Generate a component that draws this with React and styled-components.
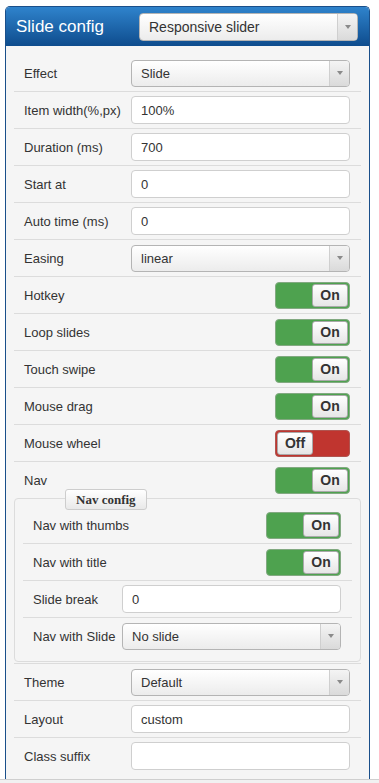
import React from "react";
import styled, { createGlobalStyle } from "styled-components";

const GlobalStyle = createGlobalStyle`
  html, body {
    margin: 0;
    padding: 0;
    background: #fff;
  }
  body {
    font-family: "Liberation Sans", Arial, sans-serif;
    font-size: 13px;
    color: #333;
  }
`;

const Page = styled.div`
  height: 783px;
  display: flex;
  flex-direction: column;
  overflow: hidden;
`;

const Panel = styled.div`
  flex: 1;
  margin: 6px 0 0 5px;
  width: 365px;
  box-sizing: border-box;
  border: 1px solid #1a4f8a;
  border-bottom: none;
  border-radius: 5px 5px 0 0;
  background: #f5f5f5;
  display: flex;
  flex-direction: column;
`;

const Footer = styled.div`
  height: 3px;
  border-top: 1px solid #cfcfcf;
  background: #f1f1f1;
`;

const Header = styled.div`
  height: 39px;
  display: flex;
  align-items: center;
  justify-content: space-between;
  padding: 0 11px 0 10px;
  border-radius: 4px 4px 0 0;
  background: linear-gradient(#2f83cc, #0e4c8d);
`;

const Title = styled.div`
  color: #fff;
  font-size: 17px;
`;

const Body = styled.div`
  padding: 9px 8px 5px 8px;
`;

const Group = styled.div`
  display: flex;
  flex-direction: column;
`;

const Row = styled.div`
  height: 37px;
  box-sizing: border-box;
  display: flex;
  align-items: center;
  justify-content: space-between;
  padding: 0 11px 0 10px;
  border-bottom: 1px solid #dcdcdc;
  &:last-child {
    height: 36px;
    border-bottom: none;
  }
`;

const Label = styled.span`
  white-space: nowrap;
`;

const Input = styled.input`
  width: 219px;
  height: 28px;
  box-sizing: border-box;
  border: 1px solid #cfcfcf;
  border-radius: 4px;
  padding: 0 9px;
  background: #fff;
  font-family: inherit;
  font-size: 13px;
  color: #333;
  outline: none;
`;

const SelectBox = styled.div`
  width: 219px;
  height: ${(p) => (p.$big ? 28 : 27)}px;
  box-sizing: border-box;
  display: flex;
  border: 1px solid #b4b4b4;
  border-radius: 4px;
  background: linear-gradient(#ffffff, #ececec);
  font-size: ${(p) => (p.$big ? 14 : 13)}px;
  color: #333;
`;

const SelectText = styled.span`
  flex: 1;
  display: flex;
  align-items: center;
  padding-left: 9px;
`;

const Arrow = styled.span`
  width: 19px;
  display: flex;
  align-items: center;
  justify-content: center;
  border-left: 1px solid #cfcfcf;
  border-radius: 0 3px 3px 0;
  background: linear-gradient(#f4f4f4, #dadada);
  &::after {
    content: "";
    border-left: 3px solid transparent;
    border-right: 3px solid transparent;
    border-top: 4px solid #8a8a8a;
  }
`;

const Switch = styled.div`
  width: 75px;
  height: 27px;
  box-sizing: border-box;
  padding: 1px;
  display: flex;
  justify-content: ${(p) => (p.$on ? "flex-end" : "flex-start")};
  border: 1px solid ${(p) => (p.$on ? "#82a981" : "#b0544f")};
  border-radius: 4px;
  background: ${(p) => (p.$on ? "#4ea24f" : "#c0352f")};
`;

const Knob = styled.span`
  width: 36px;
  box-sizing: border-box;
  display: flex;
  align-items: center;
  justify-content: center;
  border: 1px solid #a9a9a9;
  border-radius: 3px;
  background: linear-gradient(#ffffff, #e6e6e6);
  font-weight: bold;
  font-size: 14px;
  color: #333;
`;

const FieldsetWrap = styled.div`
  border-bottom: 1px solid #dcdcdc;
  padding-bottom: 1px;
`;

const Fieldset = styled.div`
  display: flex;
  flex-direction: column;
  border: 1px solid #dcdcdc;
  border-radius: 4px;
  padding: 0 8px 7px 8px;
`;

const Legend = styled.div`
  align-self: flex-start;
  margin: -10px 0 -3px 42px;
  height: 21px;
  box-sizing: border-box;
  padding: 0 10px;
  border: 1px solid #cdcdcd;
  border-radius: 3px;
  background: linear-gradient(#ffffff, #e9e9e9);
  font-family: "Liberation Serif", "Times New Roman", serif;
  font-weight: bold;
  font-size: 13px;
  line-height: 19px;
  color: #333;
  position: relative;
`;

const Select = ({ value, big }) => (
  <SelectBox $big={big}>
    <SelectText>{value}</SelectText>
    <Arrow />
  </SelectBox>
);

const Toggle = ({ on }) => (
  <Switch $on={on}>
    <Knob>{on ? "On" : "Off"}</Knob>
  </Switch>
);

const Field = ({ label, children }) => (
  <Row>
    <Label>{label}</Label>
    {children}
  </Row>
);

const App = () => (
  <Page>
    <GlobalStyle />
    <Panel>
      <Header>
        <Title>Slide config</Title>
        <Select value="Responsive slider" big />
      </Header>
      <Body>
        <Group>
          <Field label="Effect">
            <Select value="Slide" />
          </Field>
          <Field label="Item width(%,px)">
            <Input defaultValue="100%" />
          </Field>
          <Field label="Duration (ms)">
            <Input defaultValue="700" />
          </Field>
          <Field label="Start at">
            <Input defaultValue="0" />
          </Field>
          <Field label="Auto time (ms)">
            <Input defaultValue="0" />
          </Field>
          <Field label="Easing">
            <Select value="linear" />
          </Field>
          <Field label="Hotkey">
            <Toggle on />
          </Field>
          <Field label="Loop slides">
            <Toggle on />
          </Field>
          <Field label="Touch swipe">
            <Toggle on />
          </Field>
          <Field label="Mouse drag">
            <Toggle on />
          </Field>
          <Field label="Mouse wheel">
            <Toggle on={false} />
          </Field>
          <Field label="Nav">
            <Toggle on />
          </Field>
        </Group>
        <FieldsetWrap>
          <Fieldset>
            <Legend>Nav config</Legend>
            <Field label="Nav with thumbs">
              <Toggle on />
            </Field>
            <Field label="Nav with title">
              <Toggle on />
            </Field>
            <Field label="Slide break">
              <Input defaultValue="0" />
            </Field>
            <Field label="Nav with Slide">
              <Select value="No slide" />
            </Field>
          </Fieldset>
        </FieldsetWrap>
        <Group>
          <Field label="Theme">
            <Select value="Default" />
          </Field>
          <Field label="Layout">
            <Input defaultValue="custom" />
          </Field>
          <Field label="Class suffix">
            <Input defaultValue="" />
          </Field>
        </Group>
      </Body>
    </Panel>
    <Footer />
  </Page>
);

export default App;
